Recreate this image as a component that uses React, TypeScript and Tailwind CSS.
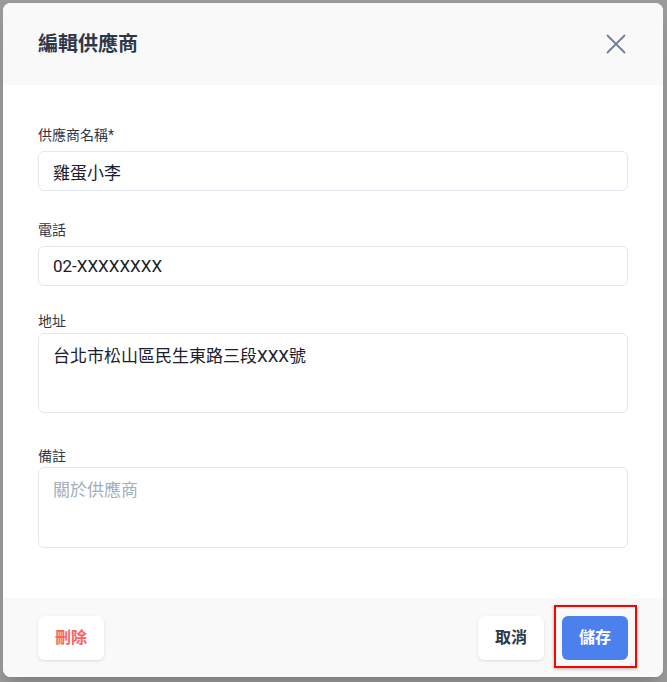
import React from 'react';

const font = { fontFamily: 'Roboto, "Noto Sans CJK TC", sans-serif' };

const CloseIcon = () => (
  <svg width="20" height="20" viewBox="0 0 20 20" fill="none" stroke="#718096" strokeWidth="1.8" strokeLinecap="round">
    <path d="M1.5 1.5 L18.5 18.5 M18.5 1.5 L1.5 18.5" />
  </svg>
);

const App = () => {
  return (
    <div className="min-h-[682px] bg-[#9a9a9b] p-[3px] pr-[4px] pb-[5px]" style={font}>
      <div className="flex h-[674px] flex-col overflow-hidden rounded-lg bg-white shadow-xl">
        {/* Header */}
        <div className="flex h-[82px] shrink-0 items-center justify-between bg-[#f9f9fa] pl-[35px] pr-[31px]">
          <h2 className="text-xl font-bold text-[#2d3748]">編輯供應商</h2>
          <button className="flex h-8 w-8 items-center justify-center">
            <CloseIcon />
          </button>
        </div>

        {/* Body */}
        <div className="flex-1 px-[35px] pt-[40px]">
          <label className="mb-[6px] block text-sm leading-5 text-[#2d3748]">供應商名稱*</label>
          <input
            className="block h-10 w-full rounded-md border border-[#e2e8f0] px-[14px] text-[17px] text-[#1a202c] outline-none"
            defaultValue="雞蛋小李"
          />

          <label className="mt-[29px] mb-[6px] block text-sm leading-5 text-[#2d3748]">電話</label>
          <input
            className="block h-10 w-full rounded-md border border-[#e2e8f0] px-[14px] text-[17px] text-[#1a202c] outline-none"
            defaultValue="02-XXXXXXXX"
          />

          <label className="mt-[25px] mb-[2px] block text-sm leading-5 text-[#2d3748]">地址</label>
          <textarea
            className="block h-[80px] w-full resize-none rounded-md border border-[#e2e8f0] px-[14px] pt-[10px] text-[17px] leading-6 text-[#1a202c] outline-none"
            defaultValue="台北市松山區民生東路三段XXX號"
          />

          <label className="mt-[33px] mb-[1px] block text-sm leading-5 text-[#2d3748]">備註</label>
          <textarea
            className="block h-[81px] w-full resize-none rounded-md border border-[#e2e8f0] px-[14px] pt-[10px] text-[17px] leading-6 text-[#1a202c] outline-none placeholder:text-[#a0aec0]"
            placeholder="關於供應商"
          />
        </div>

        {/* Footer */}
        <div className="flex h-[79px] shrink-0 items-center justify-between bg-[#f9f9fa] px-[35px]">
          <button className="h-11 w-[66px] rounded-md bg-white text-base font-semibold text-[#f56565] shadow-[0_1px_3px_rgba(0,0,0,0.12)]">
            刪除
          </button>
          <div className="flex items-center gap-[18px]">
            <button className="h-11 w-[66px] rounded-md bg-white text-base font-semibold text-[#2d3748] shadow-[0_1px_3px_rgba(0,0,0,0.12)]">
              取消
            </button>
            <div className="relative">
              <button className="h-11 w-[66px] rounded-md bg-[#4c80ec] text-base font-semibold text-white">
                儲存
              </button>
              <span className="pointer-events-none absolute -top-[11px] -bottom-[8px] -left-[8px] -right-[9px] border-2 border-[#ff0000] shadow-[0_1px_3px_rgba(0,0,0,0.3)]" />
            </div>
          </div>
        </div>
      </div>
    </div>
  );
};

export default App;
